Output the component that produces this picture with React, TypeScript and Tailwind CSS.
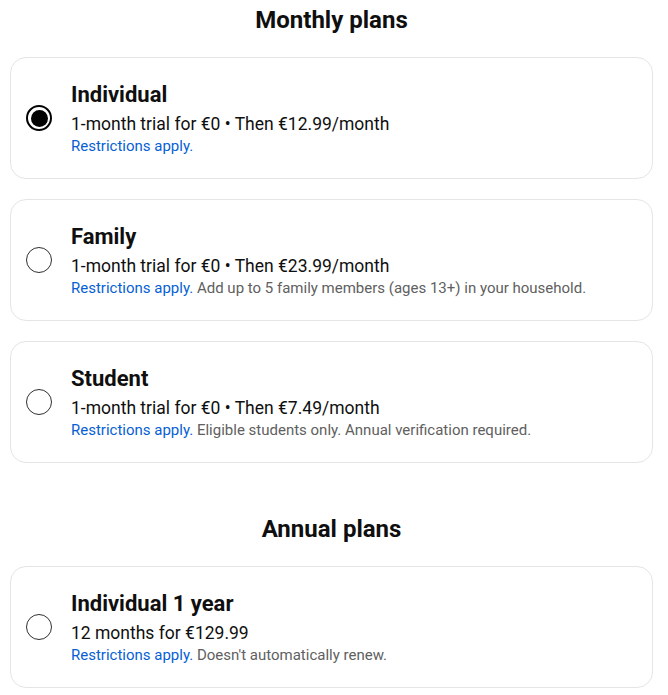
import { useState } from "react";

type Plan = {
  id: string;
  title: string;
  price: string;
  note?: string;
};

const monthly: Plan[] = [
  { id: "individual", title: "Individual", price: "1-month trial for €0 • Then €12.99/month" },
  {
    id: "family",
    title: "Family",
    price: "1-month trial for €0 • Then €23.99/month",
    note: "Add up to 5 family members (ages 13+) in your household.",
  },
  {
    id: "student",
    title: "Student",
    price: "1-month trial for €0 • Then €7.49/month",
    note: "Eligible students only. Annual verification required.",
  },
];

const annual: Plan[] = [
  { id: "year", title: "Individual 1 year", price: "12 months for €129.99", note: "Doesn't automatically renew." },
];

function Radio({ checked }: { checked: boolean }) {
  return checked ? (
    <span className="flex h-[26px] w-[26px] shrink-0 items-center justify-center rounded-full border-2 border-[#030303]">
      <span className="h-[17px] w-[17px] rounded-full bg-[#030303]" />
    </span>
  ) : (
    <span className="h-[26px] w-[26px] shrink-0 rounded-full border-[1.5px] border-[#303030]" />
  );
}

function PlanCard({ plan, selected, onPick }: { plan: Plan; selected: boolean; onPick: () => void }) {
  return (
    <button
      type="button"
      onClick={onPick}
      className="flex h-[122px] w-full items-center gap-[19px] rounded-[16px] border border-[#e5e5e5] bg-white pl-[15px] text-left"
    >
      <Radio checked={selected} />
      <div className="flex flex-col">
        <span className="text-[22px] font-bold leading-[28px] text-[#0f0f0f]">{plan.title}</span>
        <span className="mt-[3px] text-[17.5px] leading-[24px] text-[#0f0f0f]">{plan.price}</span>
        <span className="text-[15px] leading-[20px] text-[#606060]">
          <span className="text-[#065fd4]">Restrictions apply.</span>
          {plan.note ? ` ${plan.note}` : null}
        </span>
      </div>
    </button>
  );
}

export default function App() {
  const [picked, setPicked] = useState("individual");

  return (
    <div className="min-h-screen bg-white font-['Roboto',sans-serif]">
      <div className="ml-[10px] w-[643px]">
        <h2 className="pt-[4px] text-center text-[24px] font-bold leading-[32px] text-[#0f0f0f]">Monthly plans</h2>
        <div className="mt-[21px] flex flex-col gap-[20px]">
          {monthly.map((p) => (
            <PlanCard key={p.id} plan={p} selected={picked === p.id} onPick={() => setPicked(p.id)} />
          ))}
        </div>
        <h2 className="mt-[50px] text-center text-[24px] font-bold leading-[32px] text-[#0f0f0f]">Annual plans</h2>
        <div className="mt-[21px] flex flex-col gap-[20px]">
          {annual.map((p) => (
            <PlanCard key={p.id} plan={p} selected={picked === p.id} onPick={() => setPicked(p.id)} />
          ))}
        </div>
      </div>
    </div>
  );
}
